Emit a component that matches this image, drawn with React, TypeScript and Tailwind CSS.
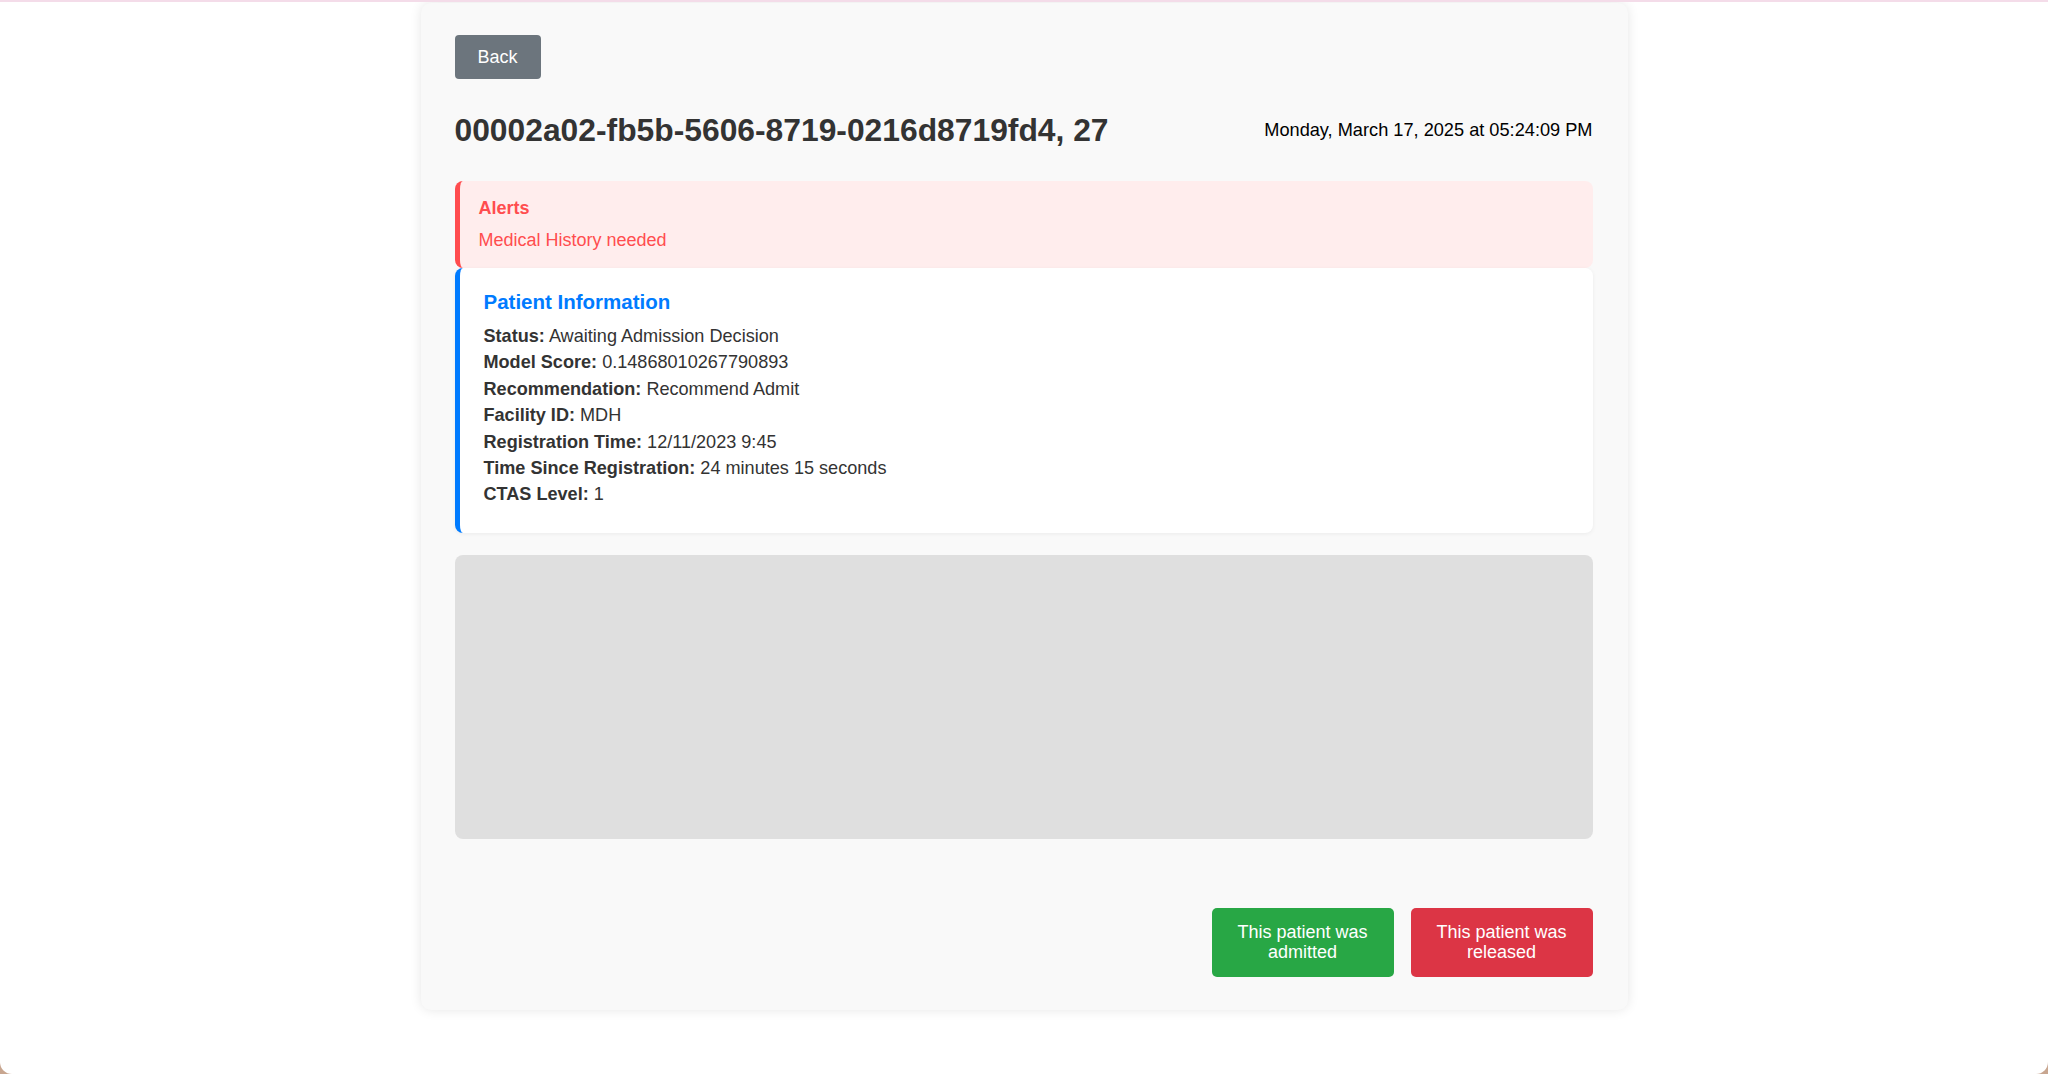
import React from "react";

const patient = {
  id: "00002a02-fb5b-5606-8719-0216d8719fd4",
  age: 27,
  status: "Awaiting Admission Decision",
  modelScore: "0.14868010267790893",
  recommendation: "Recommend Admit",
  facilityId: "MDH",
  registrationTime: "12/11/2023 9:45",
  timeSince: "24 minutes 15 seconds",
  ctas: "1",
};

export default function App() {
  const rows: [string, string][] = [
    ["Status", patient.status],
    ["Model Score", patient.modelScore],
    ["Recommendation", patient.recommendation],
    ["Facility ID", patient.facilityId],
    ["Registration Time", patient.registrationTime],
    ["Time Since Registration", patient.timeSince],
    ["CTAS Level", patient.ctas],
  ];

  return (
    <div
      className="h-[1074px] w-full bg-[#c8a690]"
      style={{ fontFamily: '"Liberation Sans", Arial, sans-serif' }}
    >
      <div className="h-full w-full overflow-hidden rounded-b-[12px] border-t-2 border-[#f4dce9] bg-white">
        <div className="mx-auto mt-[1px] w-[1207px] rounded-[10px] bg-[#f9f9f9] pb-[33px] pl-[34px] pr-[35px] pt-[32px] shadow-[0_0_12px_rgba(0,0,0,0.1)]">
          <button
            type="button"
            className="h-[44px] w-[86px] rounded-[4px] bg-[#6c757d] text-[18px] text-white"
          >
            Back
          </button>

          <div className="mt-[32px] flex h-[38px] items-center justify-between">
            <h1 className="text-[31.8px] font-bold leading-[38px] text-[#333]">
              {patient.id}, {patient.age}
            </h1>
            <span className="pt-[2px] text-[18.2px] text-black">
              Monday, March 17, 2025 at 05:24:09 PM
            </span>
          </div>

          <div className="mt-[32px] rounded-[8px] border-l-[5px] border-[#ff4d4f] bg-[#ffeded] pb-[17px] pl-[19px] pt-[17px]">
            <div className="text-[18px] font-bold leading-[21px] text-[#ff4d4f]">
              Alerts
            </div>
            <div className="mt-[11px] text-[18px] leading-[21px] text-[#ff4d4f]">
              Medical History needed
            </div>
          </div>

          <div className="rounded-[8px] border-l-[5px] border-[#007bff] bg-white pb-[25px] pl-[24px] pt-[22px] shadow-[0_1px_4px_rgba(0,0,0,0.06)]">
            <h3 className="text-[20.5px] font-bold leading-[24px] text-[#007bff]">
              Patient Information
            </h3>
            <div className="mt-[9px]">
              {rows.map(([label, value]) => (
                <div
                  key={label}
                  className="text-[18.1px] leading-[26.4px] text-[#333]"
                >
                  <span className="font-bold">{label}:</span> {value}
                </div>
              ))}
            </div>
          </div>

          <div className="mt-[22px] h-[284px] rounded-[8px] bg-[#dfdfdf]" />

          <div className="mt-[69px] flex justify-end gap-[17px]">
            <button
              type="button"
              className="h-[69px] w-[182px] rounded-[5px] bg-[#28a745] px-[16px] text-[18px] leading-[20.7px] text-white"
            >
              This patient was admitted
            </button>
            <button
              type="button"
              className="h-[69px] w-[182px] rounded-[5px] bg-[#dc3545] px-[16px] text-[18px] leading-[20.7px] text-white"
            >
              This patient was released
            </button>
          </div>
        </div>
      </div>
    </div>
  );
}
